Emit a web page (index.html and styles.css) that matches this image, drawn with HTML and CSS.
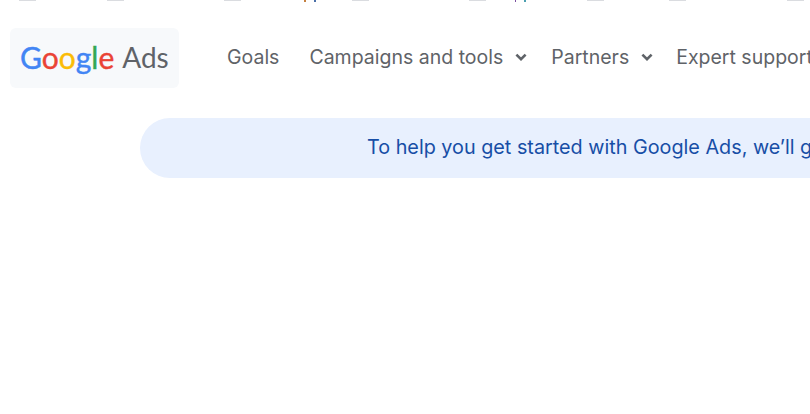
FILE: index.html
```html
<!DOCTYPE html>
<html lang="en">
<head>
    <meta charset="UTF-8">
    <meta name="viewport" content="width=device-width, initial-scale=1.0">
    <title>Google Ads</title>
    <link rel="stylesheet" href="styles.css">
</head>
<body>

    <div class="clipped-row">
        <span class="dash"></span>
        <span class="dash"></span>
        <span class="dash"></span>
        <span class="tail tail-orange"></span>
        <span class="tail tail-blue"></span>
        <span class="dash"></span>
        <span class="dash"></span>
        <span class="tail tail-purple"></span>
        <span class="tail tail-teal"></span>
        <span class="dash"></span>
        <span class="dash"></span>
        <span class="dash"></span>
    </div>

    <header class="topbar">
        <a class="logo" href="#">
            <span class="logo-google"><span class="g-blue">G</span><span class="g-red">o</span><span class="g-yellow">o</span><span class="g-blue">g</span><span class="g-green">l</span><span class="g-red">e</span></span>
            <span class="logo-ads">Ads</span>
        </a>
        <nav class="nav">
            <a class="nav-item goals" href="#">Goals</a>
            <a class="nav-item campaigns" href="#">Campaigns and tools
                <svg class="chevron" viewBox="0 0 12 9"><polyline points="1.4,1.6 6,6.2 10.6,1.6"/></svg>
            </a>
            <a class="nav-item partners" href="#">Partners
                <svg class="chevron" viewBox="0 0 12 9"><polyline points="1.4,1.6 6,6.2 10.6,1.6"/></svg>
            </a>
            <a class="nav-item" href="#">Expert support</a>
        </nav>
    </header>

    <div class="notice">
        <p>To help you get started with Google Ads, we’ll guide you through the setup</p>
    </div>

</body>
</html>
```

FILE: styles.css
```css
html, body {
    margin: 0;
    padding: 0;
    height: 100%;
    background-color: #ffffff;
    overflow: hidden;
}
body {
    width: 810px;
    height: 414px;
    font-family: Inter, Roboto, sans-serif;
}
a {
    text-decoration: none;
    color: inherit;
}

/* row cut off by the top of the window */
.clipped-row {
    display: flex;
    height: 2px;
    padding-left: 19px;
    align-items: flex-start;
}
.dash {
    flex: none;
    width: 17px;
    height: 1px;
    background-color: #dadce0;
}
.dash:nth-child(2) { margin-left: 71px; }
.dash:nth-child(3) { margin-left: 100px; }
.dash:nth-child(6) { margin-left: 36px; }
.dash:nth-child(7) { margin-left: 100px; }
.dash:nth-child(10) { margin-left: 61px; }
.dash:nth-child(11) { margin-left: 65px; }
.dash:nth-child(12) { margin-left: 101px; }
.tail {
    flex: none;
    width: 2px;
    height: 2px;
}
.tail-orange { margin-left: 63px; background-color: #c5803f; }
.tail-blue { margin-left: 8px; background-color: #4a6fa8; }
.tail-purple { margin-left: 29px; width: 1px; background-color: #7a4fa0; }
.tail-teal { margin-left: 8px; background-color: #4b9fb0; }

.topbar {
    display: flex;
    align-items: center;
    padding: 26px 0 0 10px;
    white-space: nowrap;
}
.logo {
    display: flex;
    flex: none;
    align-items: center;
    box-sizing: border-box;
    width: 169px;
    height: 60px;
    padding: 0 0 3px 10px;
    background-color: #f7f9fb;
    border-radius: 6px;
    font-family: Lato, Roboto, sans-serif;
    line-height: 1;
}
.logo-google {
    font-size: 30px;
    -webkit-text-stroke: 0.4px;
}
.logo-ads {
    margin-left: 8px;
    font-size: 28px;
    color: #5f6368;
}
.g-blue { color: #4285f4; }
.g-red { color: #ea4335; }
.g-yellow { color: #fbbc05; }
.g-green { color: #34a853; }

.nav {
    display: flex;
    align-items: center;
    margin-left: 48px;
    padding-bottom: 2px;
}
.nav-item {
    display: flex;
    align-items: center;
    font-size: 19.5px;
    color: #5f6368;
}
.goals { margin-right: 30px; }
.campaigns { margin-right: 24px; }
.partners { margin-right: 23px; }
.chevron {
    flex: none;
    width: 12px;
    height: 9px;
    margin-left: 12px;
    fill: none;
    stroke: #5f6368;
    stroke-width: 2.6;
}

.notice {
    width: 900px;
    height: 60px;
    margin: 30px 0 0 140px;
    padding-left: 227px;
    display: flex;
    align-items: center;
    background-color: #e8f0fe;
    border-radius: 30px;
    white-space: nowrap;
}
.notice p {
    margin: 0;
    padding-bottom: 2px;
    font-size: 19.8px;
    color: #174ea6;
}
```
